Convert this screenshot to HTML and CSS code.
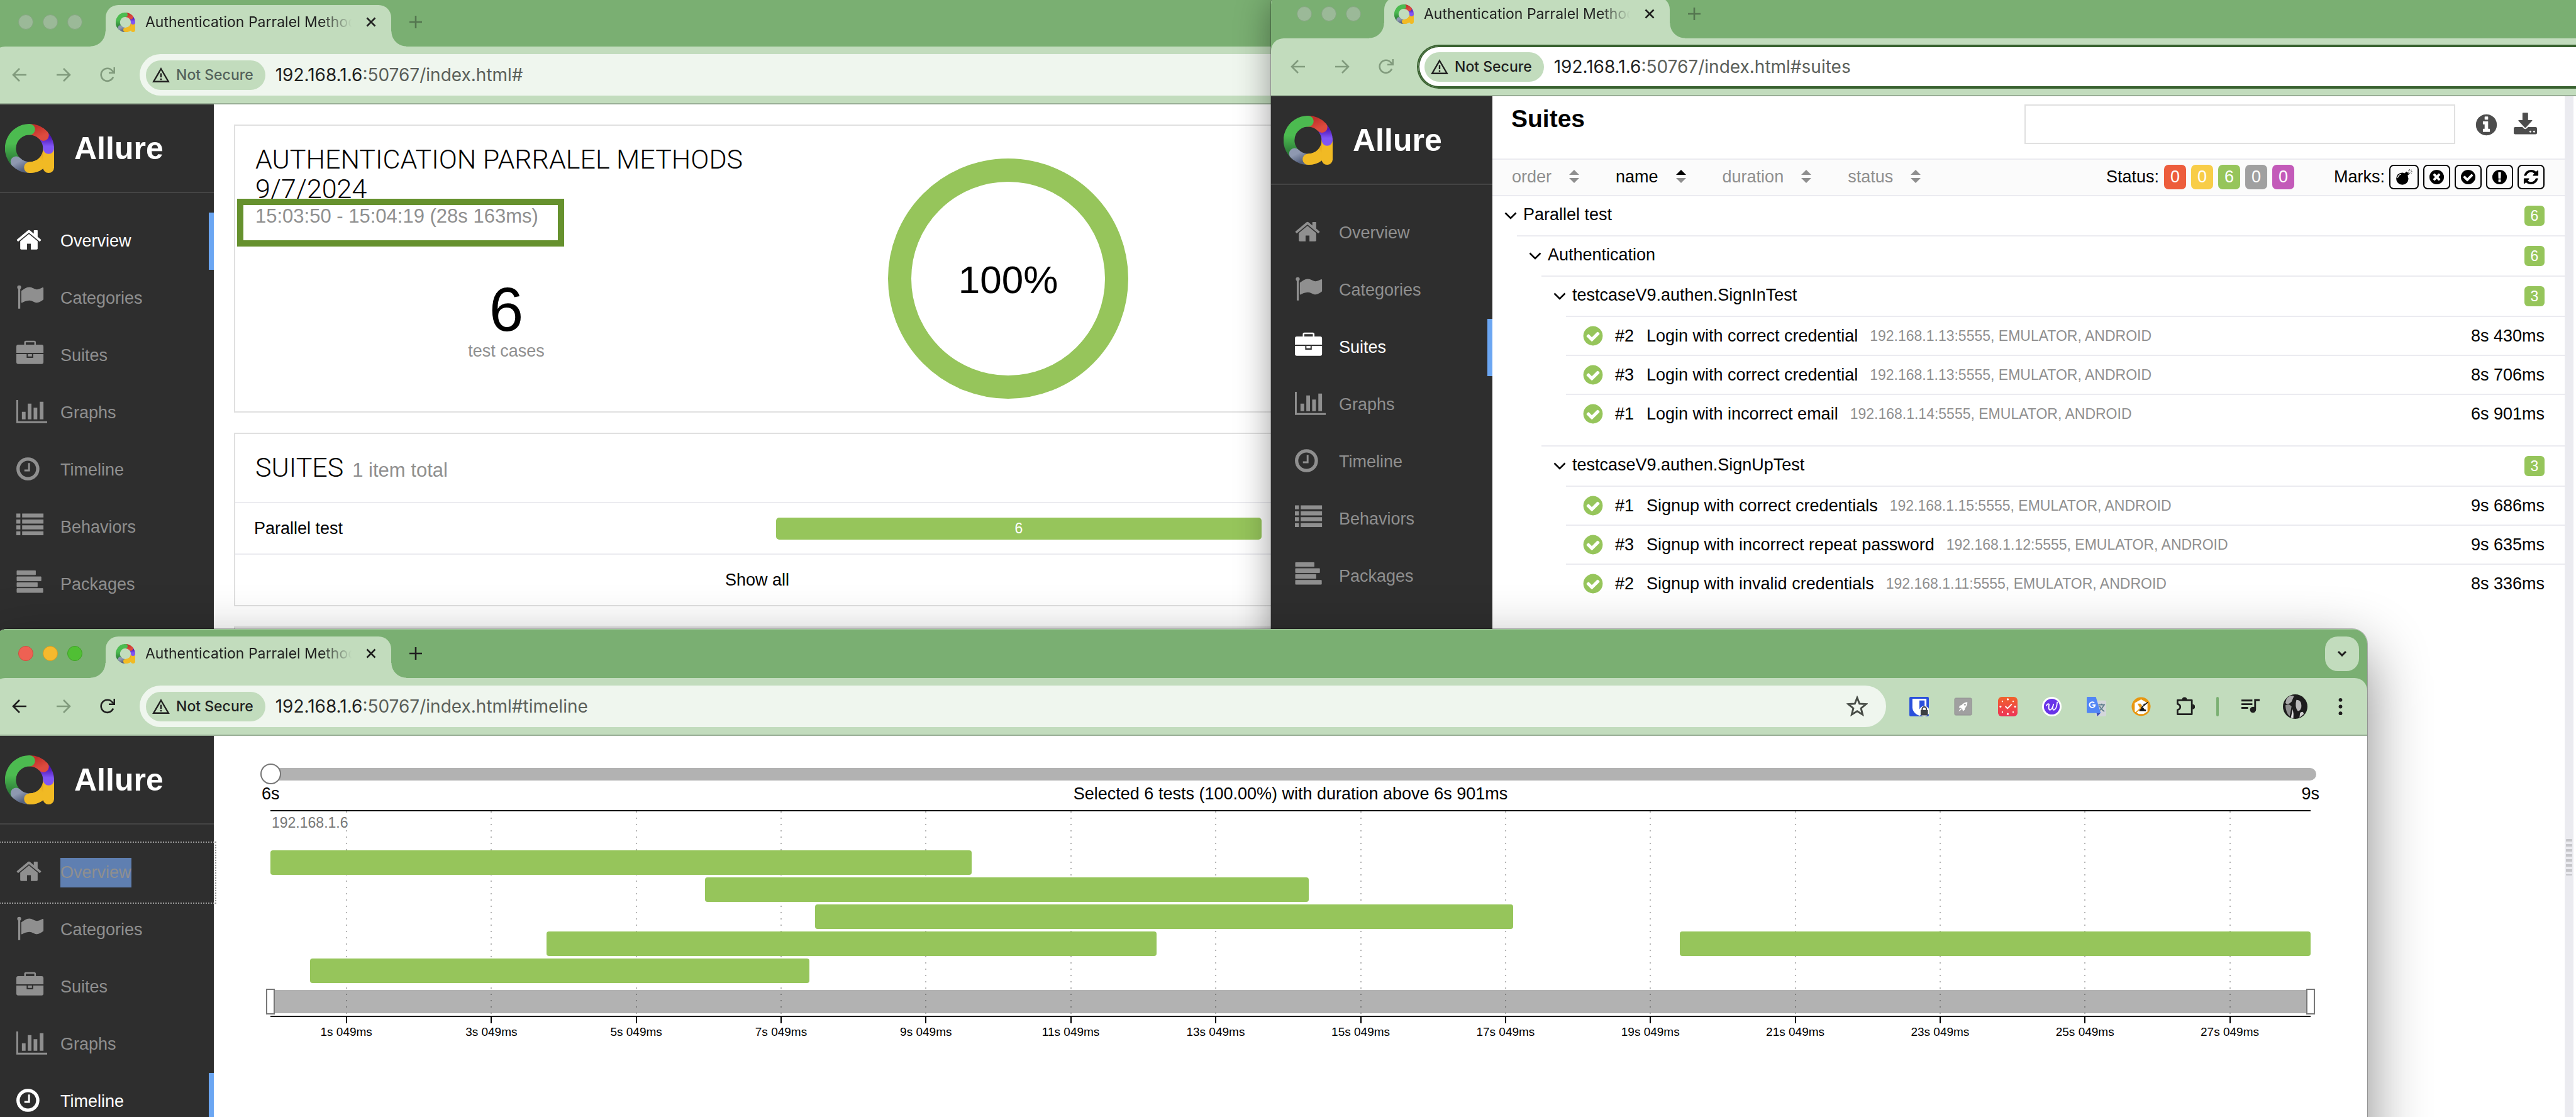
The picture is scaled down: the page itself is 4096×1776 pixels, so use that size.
FILE: index.html
```html
<!DOCTYPE html>
<html lang="en">
<head>
<meta charset="utf-8">
<title>Allure report windows</title>
<link rel="stylesheet" href="styles.css">
</head>
<body>
<svg class="sprite" aria-hidden="true">
  <defs>
    <linearGradient id="g-green" x1="0" y1="0" x2="0" y2="1"><stop offset=".45" stop-color="#4cbb50"/><stop offset="1" stop-color="#2c7a38"/></linearGradient>
    <linearGradient id="g-gray" x1="0" y1="0" x2="1" y2="1"><stop offset=".1" stop-color="#8e98b0"/><stop offset="1" stop-color="#56627f"/></linearGradient>
    <linearGradient id="g-red" x1="0" y1="0" x2="1" y2="1"><stop offset="0" stop-color="#c1302a"/><stop offset="1" stop-color="#dd4b3e"/></linearGradient>
    <linearGradient id="g-purple" x1="0" y1="0" x2="0" y2="1"><stop offset="0" stop-color="#5118b8"/><stop offset=".8" stop-color="#8055f6"/></linearGradient>
    <linearGradient id="g-yellow" x1="0" y1="1" x2="1" y2="0"><stop offset=".5" stop-color="#f1ba24"/><stop offset="1" stop-color="#cf7f1c"/></linearGradient>
    <linearGradient id="g-clock" x1="0" y1="0" x2="0" y2="1"><stop offset="0" stop-color="#f0632c"/><stop offset="1" stop-color="#ee3257"/></linearGradient>
  </defs>
  <symbol id="logo" viewBox="0 0 80 80"><g fill="none" stroke-width="18" stroke-linecap="round">
    <path d="M40 71A31 31 0 0 0 71 40" stroke="url(#g-yellow)"/>
    <path d="M71 42V71" stroke="#f1ba24"/>
    <path d="M65 22A31 31 0 0 1 71 40" stroke="url(#g-purple)"/>
    <path d="M40 9A31 31 0 0 1 62.500 18.700" stroke="url(#g-red)"/>
    <path d="M17 61A31 31 0 0 1 40 9" stroke="url(#g-green)"/>
    <path d="M18 61.800A31 31 0 0 0 38 71" stroke="url(#g-gray)"/>
    <path d="M40 71Q47 71 53 68" stroke="#f1ba24"/></g></symbol>
  <symbol id="home" viewBox="0 -25 50 50"><path transform="translate(0 -24.200) scale(.02455)" d="M1408 992v480q0 26-19 45t-45 19h-384v-384h-256v384h-384q-26 0-45-19t-19-45v-480q0-1 .5-3t.5-3l575-474 575 474q1 2 1 6zm223-69l-62 74q-8 9-21 11h-3q-13 0-21-7l-692-577-692 577q-12 8-24 7-13-2-21-11l-62-74q-8-10-7-23.500t11-21.500l719-599q32-26 76-26t76 26l244 204v-195q0-14 9-23t23-9h192q14 0 23 9t9 23v408l219 182q10 8 11 21.500t-7 23.500z"/></symbol>
  <symbol id="flag" viewBox="0 -25 50 50"><circle cx="4.600" cy="-18" r="3.200"/><path d="M3-18H6.300V16.500H3zM8-12.200C12-15 16-18.300 21-18.300S29-14.600 33.500-14.600C37-14.600 40-17 42.600-17.900Q44-18 44-16.800V1Q44 2 43 2.600C40 4.500 37 6.900 33.500 6.900C29 6.900 26 3.200 21 3.200C16 3.200 12 5.500 9 7.200Q8 7.200 8 6.400Z"/></symbol>
  <symbol id="case" viewBox="0 -25 50 50"><path d="M3-17.800H41a3 3 0 0 1 3 3V-4.500H0V-14.800a3 3 0 0 1 3-3ZM0-2.500H16.700V3.500H27.300V-2.500H44V10.500a3 3 0 0 1-3 3H3a3 3 0 0 1-3-3ZM18.700-2.500H25.300V1.200H18.700Z"/><path d="M14-17V-21.500Q14-22.900 15.400-22.900H29Q30.400-22.900 30.400-21.500V-17" fill="none" stroke="currentColor" stroke-width="2.600"/></symbol>
  <symbol id="chart" viewBox="0 -25 50 50"><path d="M0-21H3V13.500H50V16.500H0ZM9-1.800H15V10.400H9ZM18.500-15H24.500V10.400H18.500ZM28-8.500H34V10.400H28ZM38-18H44V10.400H38Z"/></symbol>
  <symbol id="clock" viewBox="0 -25 50 50"><g fill="none" stroke="currentColor"><circle cx="18.750" cy="-2" r="16" stroke-width="5.400"/><path d="M20.600-11.500V.500H13" stroke-width="3"/></g></symbol>
  <symbol id="list" viewBox="0 -25 50 50"><path d="M0-22.500H6.500V-16H0ZM9.400-22.500H44V-16H9.400ZM0-12.700H6.500V-6.200H0ZM9.400-12.700H44V-6.200H9.400ZM0-3.200H6.500V3.300H0ZM9.400-3.200H44V3.300H9.400ZM0 6.300H6.500V12.800H0ZM9.400 6.300H44V12.800H9.400Z"/></symbol>
  <symbol id="lines" viewBox="0 -25 50 50"><path d="M1-22.500H31V-16H1ZM1-12.700H40V-6.200H1ZM1-3.200H34V3.300H1ZM1 6.300H43V12.800H1Z" stroke="currentColor" stroke-width="1" stroke-linejoin="round"/></symbol>
  <symbol id="ok" viewBox="0 0 1792 1792"><path d="M1412 734q0-28-18-46l-91-90q-19-19-45-19t-45 19l-408 407-226-226q-19-19-45-19t-45 19l-91 90q-18 18-18 46 0 27 18 45l362 362q19 19 45 19 27 0 46-19l543-543q18-18 18-45zm252 162q0 209-103 385.500t-279.500 279.500-385.500 103-385.500-103-279.500-279.500-103-385.500 103-385.500 279.500-279.500 385.500-103 385.500 103 279.500 279.500 103 385.500z"/></symbol>
  <symbol id="times" viewBox="0 0 1792 1792"><path d="M1277 1122q0-26-19-45l-181-181 181-181q19-19 19-45 0-27-19-46l-90-90q-19-19-46-19-26 0-45 19l-181 181-181-181q-19-19-45-19-27 0-46 19l-90 90q-19 19-19 46 0 26 19 45l181 181-181 181q-19 19-19 45 0 27 19 46l90 90q19 19 46 19 26 0 45-19l181-181 181 181q19 19 45 19 27 0 46-19l90-90q19-19 19-46zm387-226q0 209-103 385.500t-279.500 279.500-385.500 103-385.500-103-279.500-279.500-103-385.500 103-385.500 279.500-279.500 385.500-103 385.500 103 279.500 279.500 103 385.500z"/></symbol>
  <symbol id="alert" viewBox="0 0 1792 1792"><path d="M896 128q209 0 385.500 103t279.500 279.500 103 385.500-103 385.500-279.500 279.500-385.500 103-385.500-103-279.500-279.500-103-385.500 103-385.500 279.500-279.500 385.500-103zm128 1247v-190q0-14-9-23.500t-22-9.500h-192q-13 0-23 10t-10 23v190q0 13 10 23t23 10h192q13 0 22-9.500t9-23.500zm-2-344l18-621q0-12-10-18-10-8-24-8h-220q-14 0-24 8-10 6-10 18l17 621q0 10 10 17.500t24 7.500h185q14 0 23.500-7.500t10.500-17.500z"/></symbol>
  <symbol id="refresh" viewBox="0 0 1792 1792"><path d="M1639 1056q0 5-1 7-64 268-268 434.500t-478 166.500q-146 0-282.500-55t-243.500-157l-129 129q-19 19-45 19t-45-19-19-45v-448q0-26 19-45t45-19h448q26 0 45 19t19 45-19 45l-137 137q71 66 161 102t187 36q134 0 250-65t186-179q11-17 53-117 8-23 30-23h192q13 0 22.500 9.500t9.500 22.500zm25-800v448q0 26-19 45t-45 19h-448q-26 0-45-19t-19-45 19-45l138-138q-148-137-349-137-134 0-250 65t-186 179q-11 17-53 117-8 23-30 23h-199q-13 0-22.500-9.500t-9.500-22.500v-7q65-268 270-434.500t480-166.500q146 0 284 55.500t245 156.500l130-129q19-19 45-19t45 19 19 45z"/></symbol>
  <symbol id="info" viewBox="0 0 1792 1792"><path d="M1152 1376v-160q0-14-9-23t-23-9h-96v-512q0-14-9-23t-23-9h-320q-14 0-23 9t-9 23v160q0 14 9 23t23 9h96v320h-96q-14 0-23 9t-9 23v160q0 14 9 23t23 9h448q14 0 23-9t9-23zm-128-896v-160q0-14-9-23t-23-9h-192q-14 0-23 9t-9 23v160q0 14 9 23t23 9h192q14 0 23-9t9-23zm640 416q0 209-103 385.500t-279.500 279.500-385.500 103-385.500-103-279.500-279.500-103-385.500 103-385.500 279.500-279.500 385.500-103 385.500 103 279.500 279.500 103 385.500z"/></symbol>
  <symbol id="bomb" viewBox="62 304 92 88"><circle cx="99" cy="357" r="33"/><path d="M112 327l10-9 14 14-10 10z"/><path d="M126 330q4-8 9-11M139 306v6M150 309l-6 5M153 319h-7M149 329l-5-5M138 330v-5M131 309l3 4" fill="none" stroke="currentColor" stroke-width="3"/><path d="M74 352q3-14 16-19" fill="none" stroke="#fff" stroke-width="4" stroke-linecap="round"/></symbol>
  <symbol id="save" viewBox="0 0 112 105"><rect y="69" width="112" height="35" rx="7"/><path d="M42 3Q42 0 45 0H66Q69 0 69 3V36H87Q92 36 88 40L59 71Q56 75 52 71L23 40Q20 36 25 36H42Z" stroke="#fff" stroke-width="12"/><path d="M42 3Q42 0 45 0H66Q69 0 69 3V36H87Q92 36 88 40L59 71Q56 75 52 71L23 40Q20 36 25 36H42Z"/><circle cx="80" cy="91" r="4.500" fill="#fff"/><circle cx="98" cy="91" r="4.500" fill="#fff"/></symbol>
  <symbol id="down" viewBox="0 0 20 12"><path d="M1.500 1.500L10 10L18.500 1.500" fill="none" stroke="currentColor" stroke-width="2.600"/></symbol>
  <symbol id="back" viewBox="0 0 24 24"><path d="M23 12H2M12 2L2 12L12 22" fill="none" stroke="currentColor" stroke-width="2.600"/></symbol>
  <symbol id="forward" viewBox="0 0 24 24"><path d="M1 12H22M12 2L22 12L12 22" fill="none" stroke="currentColor" stroke-width="2.600"/></symbol>
  <symbol id="reload" viewBox="0 0 24 24"><path d="M21 15.500A10 10 0 1 1 19.500 5.500L22 8" fill="none" stroke="currentColor" stroke-width="2.600"/><path d="M24 0V10H14V7.500H21.500V0Z"/></symbol>
  <symbol id="close" viewBox="0 0 16 16"><path d="M1.500 1.500L14.500 14.500M14.500 1.500L1.500 14.500" stroke="currentColor" stroke-width="2.600"/></symbol>
  <symbol id="plus" viewBox="0 0 20 20"><path d="M10 0V20M0 10H20" stroke="currentColor" stroke-width="2.600"/></symbol>
  <symbol id="warn" viewBox="0 0 28 24"><path d="M14 2.500L25.800 22.700H2.200Z" fill="none" stroke="currentColor" stroke-width="2.400"/><path d="M12.800 9.500H15.200V16H12.800ZM12.800 17.800H15.200V20.200H12.800Z"/></symbol>
  <symbol id="star" viewBox="0 0 30 30"><path d="M15 3L18.300 11.400L27.300 12L20.400 17.800L22.600 26.600L15 21.800L7.400 26.600L9.600 17.800L2.700 12L11.700 11.400Z" fill="none" stroke="currentColor" stroke-width="2.600"/></symbol>
</svg>

<main class="desktop">

  <section class="window win-overview is-idle" aria-label="Overview window">
    <header class="tabstrip">
      <div class="lights"><i></i><i></i><i></i></div>
      <div class="tab"><svg class="favicon"><use href="#logo"/></svg><span class="tab-title">Authentication Parralel Methods</span><button class="tab-close" aria-label="Close tab"><svg><use href="#close"/></svg></button></div>
      <button class="new-tab" aria-label="New tab"><svg><use href="#plus"/></svg></button>
    </header>
    <div class="toolbar">
      <button class="tool" aria-label="Back"><svg><use href="#back"/></svg></button><button class="tool" aria-label="Forward"><svg><use href="#forward"/></svg></button><button class="tool" aria-label="Reload"><svg><use href="#reload"/></svg></button>
      <div class="address"><button class="chip"><svg><use href="#warn"/></svg>Not Secure</button><span class="url"><b>192.168.1.6</b>:50767/index.html#</span></div>
    </div>
    <div class="page">
      <nav class="side">
        <a class="brand" href="#"><svg><use href="#logo"/></svg>Allure</a>
        <ul class="menu">
          <li><a class="active" href="#"><svg><use href="#home"/></svg><span>Overview</span></a></li>
          <li><a href="#categories"><svg><use href="#flag"/></svg><span>Categories</span></a></li>
          <li><a href="#suites"><svg><use href="#case"/></svg><span>Suites</span></a></li>
          <li><a href="#graph"><svg><use href="#chart"/></svg><span>Graphs</span></a></li>
          <li><a href="#timeline"><svg><use href="#clock"/></svg><span>Timeline</span></a></li>
          <li><a href="#behaviors"><svg><use href="#list"/></svg><span>Behaviors</span></a></li>
          <li><a href="#packages"><svg><use href="#lines"/></svg><span>Packages</span></a></li>
        </ul>
      </nav>
      <div class="overview">
        <div class="column">
          <article class="widget summary">
            <div class="summary-text">
              <h2>AUTHENTICATION PARRALEL METHODS 9/7/2024</h2>
              <p class="subtitle">15:03:50 - 15:04:19 (28s 163ms)</p>
              <p class="total"><strong>6</strong>test cases</p>
            </div>
            <div class="donut-box">
              <div class="donut">100%</div>
            </div>
          </article>
          <article class="widget">
            <h2 class="widget-title">SUITES <small>1 item total</small></h2>
            <div class="suite-row"><a href="#suites">Parallel test</a><a class="bar" href="#suites">6</a></div>
            <a class="show-all" href="#suites">Show all</a>
          </article>
          <article class="widget"><h2 class="widget-title">ENVIRONMENT</h2></article>
        </div>
        <div class="column"></div>
      </div>
    </div>
    <div class="highlight"></div>
  </section>

  <section class="window win-suites is-idle" aria-label="Suites window">
    <header class="tabstrip">
      <div class="lights"><i></i><i></i><i></i></div>
      <div class="tab"><svg class="favicon"><use href="#logo"/></svg><span class="tab-title">Authentication Parralel Methods</span><button class="tab-close" aria-label="Close tab"><svg><use href="#close"/></svg></button></div>
      <button class="new-tab" aria-label="New tab"><svg><use href="#plus"/></svg></button>
    </header>
    <div class="toolbar">
      <button class="tool" aria-label="Back"><svg><use href="#back"/></svg></button><button class="tool" aria-label="Forward"><svg><use href="#forward"/></svg></button><button class="tool" aria-label="Reload"><svg><use href="#reload"/></svg></button>
      <div class="address focused"><button class="chip"><svg><use href="#warn"/></svg>Not Secure</button><span class="url"><b>192.168.1.6</b>:50767/index.html#suites</span></div>
    </div>
    <div class="page">
      <nav class="side">
        <a class="brand" href="#"><svg><use href="#logo"/></svg>Allure</a>
        <ul class="menu">
          <li><a href="#"><svg><use href="#home"/></svg><span>Overview</span></a></li>
          <li><a href="#categories"><svg><use href="#flag"/></svg><span>Categories</span></a></li>
          <li><a class="active" href="#suites"><svg><use href="#case"/></svg><span>Suites</span></a></li>
          <li><a href="#graph"><svg><use href="#chart"/></svg><span>Graphs</span></a></li>
          <li><a href="#timeline"><svg><use href="#clock"/></svg><span>Timeline</span></a></li>
          <li><a href="#behaviors"><svg><use href="#list"/></svg><span>Behaviors</span></a></li>
          <li><a href="#packages"><svg><use href="#lines"/></svg><span>Packages</span></a></li>
        </ul>
      </nav>
      <div class="pane">
        <div class="pane-head">
          <h1>Suites</h1>
          <input class="search" type="text" aria-label="Search suites">
          <button class="head-btn" aria-label="Information"><svg class="info"><use href="#info"/></svg></button>
          <button class="head-btn" aria-label="Download CSV"><svg class="save"><use href="#save"/></svg></button>
        </div>
        <div class="filters">
          <button class="sorter">order<svg viewBox="0 0 16 22"><path d="M0 8L8 0L16 8ZM0 13H16L8 21Z"/></svg></button>
          <button class="sorter asc">name<svg viewBox="0 0 16 22"><path d="M0 8L8 0L16 8Z"/><path class="dim" d="M0 13H16L8 21Z"/></svg></button>
          <button class="sorter">duration<svg viewBox="0 0 16 22"><path d="M0 8L8 0L16 8ZM0 13H16L8 21Z"/></svg></button>
          <button class="sorter">status<svg viewBox="0 0 16 22"><path d="M0 8L8 0L16 8ZM0 13H16L8 21Z"/></svg></button>
          <div class="filter-group statuses"><span>Status:</span><button class="st failed">0</button><button class="st broken">0</button><button class="st passed">6</button><button class="st skipped">0</button><button class="st unknown">0</button></div>
          <div class="filter-group marks"><span>Marks:</span><button class="mark wide" aria-label="Flaky"><svg><use href="#bomb"/></svg></button><button class="mark" aria-label="New failed"><svg><use href="#times"/></svg></button><button class="mark" aria-label="New passed"><svg><use href="#ok"/></svg></button><button class="mark" aria-label="New broken"><svg><use href="#alert"/></svg></button><button class="mark" aria-label="Retries"><svg><use href="#refresh"/></svg></button></div>
        </div>
        <ul class="tree">
          <li><div class="node"><svg><use href="#down"/></svg><span class="name">Parallel test</span><span class="count">6</span></div>
            <ul>
              <li><div class="node"><svg><use href="#down"/></svg><span class="name">Authentication</span><span class="count">6</span></div>
                <ul>
                  <li><div class="node"><svg><use href="#down"/></svg><span class="name">testcaseV9.authen.SignInTest</span><span class="count">3</span></div>
                    <ul class="leaves">
                      <li class="leaf"><svg><use href="#ok"/></svg><span class="num">#2</span><span>Login with correct credential</span><span class="params">192.168.1.13:5555, EMULATOR, ANDROID</span><span class="time">8s 430ms</span></li>
                      <li class="leaf"><svg><use href="#ok"/></svg><span class="num">#3</span><span>Login with correct credential</span><span class="params">192.168.1.13:5555, EMULATOR, ANDROID</span><span class="time">8s 706ms</span></li>
                      <li class="leaf"><svg><use href="#ok"/></svg><span class="num">#1</span><span>Login with incorrect email</span><span class="params">192.168.1.14:5555, EMULATOR, ANDROID</span><span class="time">6s 901ms</span></li>
                    </ul></li>
                  <li><div class="node"><svg><use href="#down"/></svg><span class="name">testcaseV9.authen.SignUpTest</span><span class="count">3</span></div>
                    <ul class="leaves">
                      <li class="leaf"><svg><use href="#ok"/></svg><span class="num">#1</span><span>Signup with correct credentials</span><span class="params">192.168.1.15:5555, EMULATOR, ANDROID</span><span class="time">9s 686ms</span></li>
                      <li class="leaf"><svg><use href="#ok"/></svg><span class="num">#3</span><span>Signup with incorrect repeat password</span><span class="params">192.168.1.12:5555, EMULATOR, ANDROID</span><span class="time">9s 635ms</span></li>
                      <li class="leaf"><svg><use href="#ok"/></svg><span class="num">#2</span><span>Signup with invalid credentials</span><span class="params">192.168.1.11:5555, EMULATOR, ANDROID</span><span class="time">8s 336ms</span></li>
                    </ul></li>
                </ul></li>
            </ul></li>
        </ul>
      </div>
      <div class="gutter"><i></i></div>
      <div class="pane"></div>
    </div>
  </section>

  <section class="window win-timeline" aria-label="Timeline window">
    <header class="tabstrip">
      <div class="lights"><i class="red"></i><i class="amber"></i><i class="green"></i></div>
      <div class="tab"><svg class="favicon"><use href="#logo"/></svg><span class="tab-title">Authentication Parralel Methods</span><button class="tab-close" aria-label="Close tab"><svg><use href="#close"/></svg></button></div>
      <button class="new-tab" aria-label="New tab"><svg><use href="#plus"/></svg></button>
      <button class="tab-search" aria-label="Search tabs"><svg viewBox="0 0 16 10"><path d="M2 2L8 8L14 2" fill="none" stroke="currentColor" stroke-width="3"/></svg></button>
    </header>
    <div class="toolbar">
      <button class="tool" aria-label="Back"><svg><use href="#back"/></svg></button><button class="tool off" aria-label="Forward"><svg><use href="#forward"/></svg></button><button class="tool" aria-label="Reload"><svg><use href="#reload"/></svg></button>
      <div class="address"><button class="chip"><svg><use href="#warn"/></svg>Not Secure</button><span class="url"><b>192.168.1.6</b>:50767/index.html#timeline</span><button class="bookmark" aria-label="Bookmark"><svg><use href="#star"/></svg></button></div>
      <div class="extensions">
        <button aria-label="Password vault"><svg viewBox="0 0 32 32"><rect width="32" height="32" rx="2" fill="#2a50dc"/><path d="M5 3H28V18Q27 27 16.500 31Q6 27 5 18Z" fill="#fff"/><path d="M16.500 6H25V17Q24 23 16.500 27Z" fill="#2a50dc"/><circle cx="24.500" cy="23.500" r="8.500" fill="#fff"/><path d="M21 22V20a3.500 3.500 0 0 1 7 0v2" fill="none" stroke="#3c4043" stroke-width="2"/><rect x="18.500" y="21.500" width="12" height="9" rx="1" fill="#3c4043"/></svg></button>
        <button aria-label="Rocket"><svg viewBox="0 0 32 32"><rect x="2" y="2" width="28" height="28" rx="2" fill="#a0a0a0" stroke="#929292"/><path d="M23 8.500Q17 9 13.500 13.500L10.500 14.500L9 17.500L12 18L15 21L15.500 23.500L18.500 21.500L19 18.500Q23 14.500 23 8.500ZM11.500 19L8.500 24L13.500 21Z" fill="#fff"/><circle cx="19" cy="13" r="1.500" fill="#a0a0a0"/></svg></button>
        <button aria-label="Time tracker"><svg viewBox="0 0 32 32"><rect width="32" height="32" rx="6" fill="url(#g-clock)"/><path d="M12 15.500L15.500 19L22.500 12" fill="none" stroke="#fff" stroke-width="2"/><g fill="#fff"><circle cx="16" cy="4" r="1.600"/><circle cx="16" cy="28" r="1.600"/><circle cx="4" cy="16" r="1.600"/><circle cx="28" cy="16" r="1.600"/><circle cx="7.200" cy="7.500" r="1.200"/><circle cx="24.800" cy="7.500" r="1.200"/><circle cx="7.200" cy="25" r="1.200"/><circle cx="24.800" cy="25" r="1.200"/></g></svg></button>
        <button aria-label="Writer"><svg viewBox="0 0 32 32"><circle cx="16" cy="16" r="16" fill="#fff"/><circle cx="16" cy="16" r="13" fill="#6833e8"/><path d="M7 15Q9 10 11.500 12Q10 21 13 21.500Q16.500 21 19 11.500Q16 20.500 19 21.500Q24 21 25 8" fill="none" stroke="#fff" stroke-width="1.800"/></svg></button>
        <button aria-label="Translate"><svg viewBox="0 0 32 32"><rect x="14" y="6" width="18" height="26" rx="2" fill="#d3d6da"/><path d="M19 13H30M24.500 11V13M28 13Q26 20 19 23.500M21 15Q24 21 29 24" fill="none" stroke="#5f7d8c" stroke-width="1.800"/><path d="M16 26H23L17.500 32Z" fill="#3a4fb4"/><path d="M1.500 0H15L23 26.500H1.500Q0 26.500 0 25V1.500Q0 0 1.500 0Z" fill="#5286f5"/><path d="M12.500 10A4.500 4.500 0 1 0 13.600 13.500H9.500" fill="none" stroke="#fff" stroke-width="2"/></svg></button>
        <button aria-label="XPath"><svg viewBox="0 0 32 32"><circle cx="16" cy="16" r="15.500" fill="#e8960f"/><path d="M16 4L26.500 10V24L20 28H12L5.500 24V10Z" fill="#fff"/><path d="M10 11H15L18 15L14 18Z" fill="#e8960f"/><path d="M16 18L19 17L22 21H24V23.500H13V22ZM18 14L21 11H25Z" fill="#161616"/><path d="M27 9L16 18" stroke="#161616" stroke-width="1.600"/><path d="M16 18L6 27" stroke="#e8960f" stroke-width="1.600"/></svg></button>
        <button aria-label="Extensions"><svg viewBox="0 0 32 32"><path d="M3.500 5.500H27V28.500H3.500V21.500Q8 20 8 16.500T3.500 11.500Z" fill="none" stroke="currentColor" stroke-width="2.800" stroke-linejoin="round"/><path d="M11 4.500A4 4 0 0 1 19 4.500ZM28 12A4.200 4.200 0 0 1 28 20.500Z"/></svg></button>
      </div>
      <i class="separator"></i>
      <div class="extensions small">
        <button aria-label="Media"><svg viewBox="0 0 32 32"><path d="M1 6H19M1 12H19M1 18H12" stroke="currentColor" stroke-width="3"/><path d="M22 3.500H31V7H25V21A5 5 0 1 1 22 16.600Z"/></svg></button>
        <button aria-label="Profile"><svg class="avatar" viewBox="0 0 40 40"><circle cx="20" cy="20" r="20" fill="#1d1d1d"/><path d="M6 7Q12 0 18 3L14 12Q8 18 4 14Z" fill="#a9a9a9"/><path d="M22 9Q31 9 30 21Q28 28 24 27Q19 20 22 9Z" fill="#b9b9b9"/><path d="M4 18Q10 14 14 20L11 36Q5 31 4 18Z" fill="#8d8d8d"/><path d="M16 24Q18 32 17 39L13 38Z" fill="#e2e2e2"/><path d="M28 30Q33 26 34 32L27 38Z" fill="#d0d0d0"/></svg></button>
        <button aria-label="Menu"><svg viewBox="0 0 32 32"><circle cx="16" cy="5" r="3"/><circle cx="16" cy="16" r="3"/><circle cx="16" cy="27" r="3"/></svg></button>
      </div>
    </div>
    <div class="page">
      <nav class="side">
        <a class="brand" href="#"><svg><use href="#logo"/></svg>Allure</a>
        <ul class="menu">
          <li><a class="focus" href="#"><svg><use href="#home"/></svg><span class="selected">Overview</span></a></li>
          <li><a href="#categories"><svg><use href="#flag"/></svg><span>Categories</span></a></li>
          <li><a href="#suites"><svg><use href="#case"/></svg><span>Suites</span></a></li>
          <li><a href="#graph"><svg><use href="#chart"/></svg><span>Graphs</span></a></li>
          <li><a class="active" href="#timeline"><svg><use href="#clock"/></svg><span>Timeline</span></a></li>
        </ul>
      </nav>
      <div class="timeline">
        <input class="duration" type="range" min="6" max="9" value="6" aria-label="Minimum duration">
        <div class="duration-labels"><span>6s</span><span>Selected 6 tests (100.00%) with duration above 6s 901ms</span><span>9s</span></div>
        <div class="plot">
          <div class="ticks">
            <i style="left:3.72%"><span>1s 049ms</span></i><i style="left:10.83%"><span>3s 049ms</span></i><i style="left:17.93%"><span>5s 049ms</span></i><i style="left:25.03%"><span>7s 049ms</span></i><i style="left:32.13%"><span>9s 049ms</span></i><i style="left:39.23%"><span>11s 049ms</span></i><i style="left:46.33%"><span>13s 049ms</span></i><i style="left:53.44%"><span>15s 049ms</span></i><i style="left:60.54%"><span>17s 049ms</span></i><i style="left:67.64%"><span>19s 049ms</span></i><i style="left:74.74%"><span>21s 049ms</span></i><i style="left:81.84%"><span>23s 049ms</span></i><i style="left:88.94%"><span>25s 049ms</span></i><i style="left:96.04%"><span>27s 049ms</span></i>
          </div>
          <p class="host">192.168.1.6</p>
          <div class="lanes">
            <div class="lane"><b style="width:34.37%"></b></div>
            <div class="lane"><b style="margin-left:21.29%;width:29.59%"></b></div>
            <div class="lane"><b style="margin-left:26.71%;width:34.2%"></b></div>
            <div class="lane"><b style="margin-left:13.52%;width:29.92%"></b><b style="margin-left:25.64%;width:30.92%"></b></div>
            <div class="lane"><b style="margin-left:1.95%;width:24.46%"></b></div>
          </div>
          <div class="brush"><button aria-label="Range start"></button><button aria-label="Range end"></button></div>
        </div>
      </div>
    </div>
  </section>
</main>
</body>
</html>
```

FILE: styles.css
```css
* { box-sizing: border-box; }

body {
  margin: 0;
  background: #fff;
  color: #000;
  font: 27px/32px "Liberation Sans", Arial, sans-serif;
}

button, input { font: inherit; color: inherit; margin: 0; }
button { padding: 0; border: 0; background: none; }
a { color: inherit; text-decoration: none; }
h1, h2, p, ul { margin: 0; padding: 0; font-weight: 400; }
ul { list-style: none; }
svg { display: block; fill: currentColor; flex: none; }
.sprite { position: absolute; width: 0; height: 0; }

.desktop { position: relative; height: 100vh; overflow: hidden; }

/* Browser windows on the desktop */
.window {
  position: absolute;
  isolation: isolate;
  display: flex;
  flex-direction: column;
  width: 92.1875%;
  height: 145.8%;
  background: #fff;
  border-radius: 24px;
  overflow: hidden;
}
.win-overview { left: -12px; top: -4px; }
.win-suites { left: 2021px; top: -17px; box-shadow: 0 0 0 1px rgba(0,0,0,.25), 0 16px 56px rgba(0,0,0,.4); }
.win-timeline { left: -12px; top: 1000px; box-shadow: 0 0 0 1px rgba(0,0,0,.25), 0 36px 96px rgba(0,0,0,.48); }
.window::before {
  content: "";
  position: absolute;
  z-index: -1;
  top: 78px;
  left: 0;
  right: 0;
  height: 24px;
  background: #7aaf72;
}

.tabstrip {
  display: flex;
  align-items: center;
  height: 78px;
  flex: none;
  padding: 0 13px 0 41px;
  background: #7aaf72;
  color: #1f1f1f;
}
.win-timeline .tabstrip { box-shadow: inset 0 2px 0 #98c292; }
.toolbar {
  display: flex;
  align-items: center;
  height: 92px;
  flex: none;
  padding: 0 9px 0 8px;
  background: #c2dcbd;
  border-bottom: 2px solid #98ae95;
  border-radius: 20px 20px 0 0;
  color: #1f1f1f;
}

.lights { display: flex; gap: 15px; margin-right: 37px; }
.lights i { width: 24px; height: 24px; border-radius: 50%; background: #9bb998; border: 1px solid #86a682; }
.lights .red { background: #ee6153; border-color: #d04b3f; }
.lights .amber { background: #f6b92d; border-color: #d69b1f; }
.lights .green { background: #50bf34; border-color: #3fa225; }

.tab {
  position: relative;
  align-self: flex-end;
  display: flex;
  align-items: center;
  width: 454px;
  height: 66px;
  padding: 0 24px 12px 16px;
  background: #c2dcbd;
  border-radius: 20px 20px 0 0;
  font: 23px/28px Inter, sans-serif;
}
.tab::before, .tab::after {
  content: "";
  position: absolute;
  bottom: 0;
  width: 24px;
  height: 24px;
}
.tab::before { right: 100%; background: radial-gradient(circle at 0 0, transparent 23px, #c2dcbd 24px); }
.tab::after { left: 100%; background: radial-gradient(circle at 100% 0, transparent 23px, #c2dcbd 24px); }
.favicon { width: 31px; height: 31px; margin-right: 16px; }
.tab-title {
  width: 328px;
  overflow: hidden;
  white-space: nowrap;
  -webkit-mask-image: linear-gradient(to right, #000 280px, transparent 328px);
  mask-image: linear-gradient(to right, #000 280px, transparent 328px);
}
.tab-close { margin-left: auto; }
.tab-close svg { width: 16px; height: 16px; }
.new-tab { display: grid; place-items: center; width: 60px; height: 60px; margin-left: 9px; }
.new-tab svg { width: 20px; height: 20px; }
.tab-search {
  display: grid;
  place-items: center;
  width: 54px;
  height: 55px;
  margin-left: auto;
  border-radius: 20px;
  background: #c2dcbd;
}
.tab-search svg { width: 16px; height: 10px; }

.tool { display: grid; place-items: center; width: 70px; height: 70px; }
.tool svg { width: 24px; height: 24px; }
.tool.off, .is-idle .tool { color: #819b7d; }
.is-idle .new-tab { color: #54764f; }
.is-idle .chip { color: #54625b; }
.is-idle .chip svg, .is-idle .focused .chip { color: #1f1f1f; }

.address {
  display: flex;
  align-items: center;
  flex: 1;
  height: 66px;
  margin-left: 16px;
  padding: 0 29px 0 10px;
  border-radius: 33px;
  background: #eff6ee;
  font: 28px/32px Inter, sans-serif;
  color: #5b605a;
}
.address b { font-weight: 400; color: #1f1f1f; }
.focused { background: #fff; box-shadow: 0 0 0 2px #38612f, inset 0 0 0 2px #38612f; }
.chip {
  display: flex;
  align-items: center;
  gap: 10px;
  height: 47px;
  margin-right: 16px;
  padding: 0 19px 0 10px;
  border-radius: 24px;
  background: #c2dcbd;
  color: #1f1f1f;
  font: 500 23px/28px Inter, sans-serif;
}
.chip svg { width: 28px; height: 24px; }
.bookmark { margin-left: auto; color: #474c46; }
.bookmark svg { width: 34px; height: 34px; }

.extensions { display: flex; justify-content: space-around; width: 494px; margin-left: 17px; }
.extensions.small { width: 210px; margin-left: 17px; }
.extensions svg { width: 31px; height: 31px; }
.extensions .avatar { width: 39px; height: 39px; }
.extensions button { display: grid; place-items: center; }
.separator { width: 4px; height: 31px; margin-left: 14px; border-radius: 2px; background: #7aaf72; }

/* Report shell */
.page { display: flex; flex: 1; min-height: 0; }
.side { flex: none; width: 352px; background: #2e2e2e; color: #8f8f8f; }
.brand {
  display: flex;
  align-items: center;
  gap: 32px;
  height: 141px;
  padding-left: 20px;
  border-bottom: 2px solid #444;
  color: #fff;
  font-size: 50px;
  font-weight: 700;
}
.brand svg { width: 78px; height: 78px; }
.menu { padding-top: 31px; }
.menu a { display: flex; align-items: center; gap: 21px; height: 91px; padding-left: 38px; }
.menu svg { width: 49px; height: 49px; }
.menu span { line-height: 47px; }
.menu .active { color: #fff; border-right: 8px solid #6ba6f2; }
.menu .focus { outline: 2px dotted #999; outline-offset: 2px; }
.menu .selected { background: #5f7fb1; }

/* Overview */
.overview { display: grid; grid-template-columns: 1fr 1fr; gap: 32px; flex: 1; padding: 32px; }
.column { display: flex; flex-direction: column; gap: 32px; }
.widget { border: 2px solid #e0e0e0; }
.summary { display: grid; grid-template-columns: 1fr 1fr; padding: 30px 32px; height: 458px; }
.widget h2 { font: 300 43px/47px Roboto, sans-serif; }
.subtitle { margin-top: 2px; color: #8f8f8f; font-size: 31px; line-height: 36px; }
.total { display: flex; flex-direction: column; align-items: center; padding-top: 76px; color: #8f8f8f; line-height: 24px; }
.total strong { color: #000; font-size: 98px; font-weight: 400; line-height: 108px; }
.donut-box { display: grid; place-items: start center; padding-top: 22px; }
.donut {
  display: grid;
  place-items: center;
  width: 382px;
  height: 382px;
  padding-top: 4px;
  border: 37px solid #96c55b;
  border-radius: 50%;
  font-size: 62px;
}
.widget .widget-title { display: flex; align-items: baseline; gap: 14px; padding: 30px 32px; }
.widget-title small { color: #8f8f8f; font: 31px/40px "Liberation Sans", Arial, sans-serif; }
.suite-row { display: flex; align-items: center; justify-content: space-between; height: 82px; padding: 0 28px 0 30px; border-top: 2px solid #ebebf0; }
.bar { width: 48.2%; border-radius: 5px; background: #96c55b; color: #fff; font-size: 23px; line-height: 35px; text-align: center; }
.show-all { display: block; border-top: 2px solid #ebebf0; line-height: 80px; text-align: center; }
.highlight { position: absolute; left: 389px; top: 320px; width: 520px; height: 76px; border: 10px solid #66912e; }

/* Suites */
.pane { flex: 1; min-width: 0; }
.pane-head { display: flex; align-items: flex-start; height: 101px; padding: 13px 44px 0 30px; border-bottom: 2px solid #ebebf0; color: #4d4d4d; }
.pane-head h1 { flex: 1; color: #000; font-size: 39px; font-weight: 700; line-height: 46px; }
.search { width: 685px; height: 63px; margin-right: 30px; padding: 0 16px; border: 2px solid #e0e0e0; background: #fff; }
.head-btn { display: grid; place-items: center; height: 64px; }
.head-btn .info { width: 39px; height: 39px; }
.head-btn .save { width: 37px; height: 35px; margin: 0 0 4px 24px; }
.filters { display: flex; align-items: center; height: 58px; padding: 0 32px 2px 31px; border-bottom: 2px solid #ebebf0; background: #fbfbfb; }
.sorter { display: flex; align-items: center; gap: 28px; margin-right: 58px; color: #8f8f8f; }
.sorter svg { width: 16px; height: 22px; }
.asc { color: #000; }
.dim { fill: #8f8f8f; }
.filter-group { display: flex; align-items: center; gap: 8px; }
.marks { gap: 7px; }
.statuses { margin: 0 63px 0 auto; }
.st { width: 35px; height: 39px; border-radius: 7px; color: #fff; }
.failed { background: #ed5d3c; }
.broken { background: #f8cd48; }
.passed { background: #96c55b; }
.skipped { background: #a0a0a0; }
.unknown { background: #c35ab9; }
.mark { display: grid; place-items: center; width: 43px; height: 39px; border: 2px solid #000; border-radius: 7px; color: #000; }
.mark.wide { width: 47px; }
.mark svg { width: 27px; height: 27px; }

.tree ul { margin-left: 39px; }
.node { display: flex; align-items: center; height: 62px; padding: 0 32px 0 19px; }
.node svg { width: 20px; height: 12px; margin-right: 10px; }
.node .name { flex: 1; padding-bottom: 4px; }
.count { width: 32px; height: 32px; border-radius: 6px; background: #96c55b; color: #fff; font-size: 23px; text-align: center; }
.tree ul > li { border-top: 2px solid #ebebf0; }
.leaf { display: flex; align-items: center; height: 62px; padding: 0 32px 0 25px; }
.leaf svg { width: 36px; height: 36px; color: #96c55b; }
.leaf .num { width: 30px; margin: 0 20px 0 17px; }
.leaf .params { margin-left: 19px; color: #8f8f8f; font-size: 23px; }
.leaf .time { margin-left: auto; }
.leaves { padding-bottom: 20px; }
.gutter { display: grid; place-items: center; width: 14px; background: #ebebf0; }
.gutter i { width: 10px; height: 58px; background: repeating-linear-gradient(#c6c6ca 0 4px, transparent 4px 8px); border-radius: 1px; }

/* Timeline */
.timeline { flex: 1; min-width: 0; padding: 44px 90px; }
.duration {
  appearance: none;
  -webkit-appearance: none;
  display: block;
  width: calc(100% + 25px);
  height: 33px;
  margin-left: -16px;
  background: none;
}
.duration::-webkit-slider-runnable-track { height: 20px; border-radius: 10px; background: #b2b2b2; }
.duration::-webkit-slider-thumb {
  -webkit-appearance: none;
  width: 33px;
  height: 33px;
  margin-top: -7px;
  border: 2px solid #777;
  border-radius: 50%;
  background: #fff;
}
.duration-labels { display: flex; justify-content: space-between; margin: 0 -14px 11px; line-height: 30px; }
.plot { position: relative; border-top: 2px solid #000; border-bottom: 2px solid #000; padding-bottom: 4px; }
.ticks { position: absolute; inset: 0; }
.ticks i {
  position: absolute;
  top: 0;
  bottom: 0;
  width: 2px;
  margin-left: -1px;
  background: repeating-linear-gradient(#b5b5b5 0 2px, transparent 2px 10px);
  font-style: normal;
}
.ticks i::after { content: ""; position: absolute; top: 100%; width: 2px; height: 12px; background: #000; }
.ticks span { position: absolute; top: 100%; left: 1px; padding-top: 16px; transform: translateX(-50%); font-size: 19px; line-height: 20px; white-space: nowrap; }
.host { padding: 5px 2px 30px; color: #777; font-size: 23px; line-height: 27px; }
.lanes { position: relative; display: flex; flex-direction: column; gap: 4px; }
.lane { display: flex; height: 39px; }
.lane b { border-radius: 4px; background: #96c55b; }
.brush { position: relative; display: flex; align-items: center; justify-content: space-between; height: 37px; margin-top: 11px; background: rgba(0,0,0,.3); }
.brush button { width: 14px; height: 41px; margin: 0 -7px; border: 2px solid #777; background: #fff; }
```
